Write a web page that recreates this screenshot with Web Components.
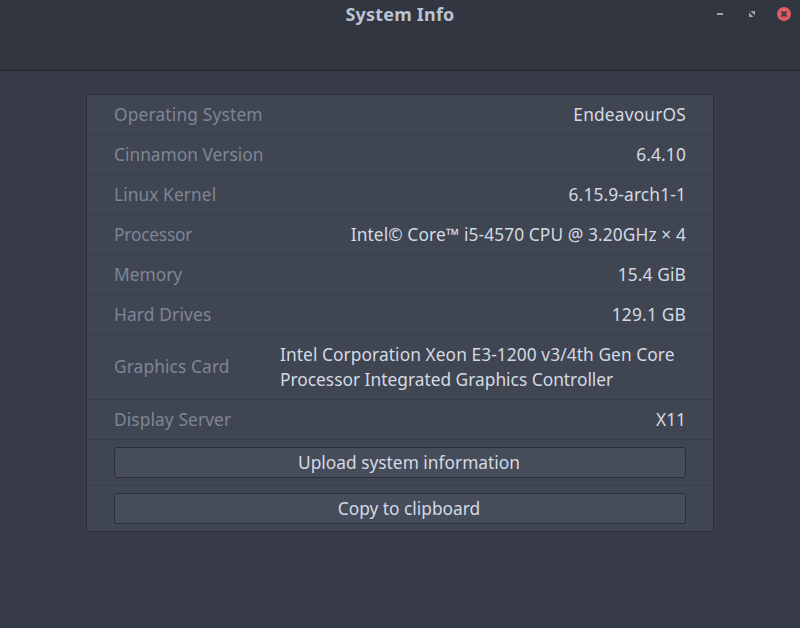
<!DOCTYPE html>
<html>
<head>
<meta charset="utf-8">
<title>System Info</title>
<style>
    html, body { margin: 0; height: 100%; }
    body { background: #383c4a; font-family: "Noto Sans", sans-serif; overflow: hidden; }
</style>
</head>
<body>
<sys-window>
    <span slot="title">System Info</span>
    <info-row label="Operating System" label-track=".17" value-track=".18">EndeavourOS</info-row>
    <info-row label="Cinnamon Version" value-track=".15">6.4.10</info-row>
    <info-row label="Linux Kernel" label-track=".08" value-track=".14">6.15.9-arch1-1</info-row>
    <info-row label="Processor" label-track="-.2" value-track=".1">Intel© Core™ i5-4570 CPU @ 3.20GHz × 4</info-row>
    <info-row label="Memory" value-track=".12">15.4 GiB</info-row>
    <info-row label="Hard Drives" label-track=".15" value-track=".2">129.1 GB</info-row>
    <info-row label="Graphics Card" label-track=".1" wrap><span style="letter-spacing:.07px">Intel Corporation Xeon E3-1200 v3/4th Gen Core</span> Processor Integrated Graphics Controller</info-row>
    <info-row label="Display Server" label-track=".1">X11</info-row>
    <button-row>Upload system information</button-row>
    <button-row last>Copy to clipboard</button-row>
</sys-window>
<script>
class SysTitlebar extends HTMLElement {
    constructor() {
        super();
        this._root = this.attachShadow({ mode: "open" });
        this._root.innerHTML = `
            <style>
                :host {
                    display: flex;
                    box-sizing: border-box;
                    height: 71px;
                    background: #323641;
                    border-bottom: 1px solid #262932;
                    color: #b9c3d2;
                    font-size: 18px;
                    font-weight: 700;
                    letter-spacing: .2px;
                    line-height: 24px;
                    position: relative;
                }
                .title { flex: 1; text-align: center; padding-top: 2px; }
                .buttons {
                    position: absolute;
                    top: 7px;
                    right: 9px;
                    display: flex;
                    gap: 18px;
                    align-items: center;
                }
                svg { display: block; }
            </style>
            <div class="title"><slot></slot></div>
            <div class="buttons">
                <svg width="14" height="14" viewBox="0 0 14 14"><rect x="4" y="6" width="6" height="2" fill="#9da3af"/></svg>
                <svg width="14" height="14" viewBox="0 0 14 14"><path d="M5.500 4H10V8.500z M4 5.500V10H8.500z" fill="#9da3af"/></svg>
                <svg width="14" height="14" viewBox="0 0 14 14">
                    <circle cx="7" cy="7" r="7" fill="#e05a64"/>
                    <path d="M4.500 4.500l5 5m0-5l-5 5" stroke="#383c4a" stroke-width="2"/>
                </svg>
            </div>
        `;
    }
}
customElements.define("sys-titlebar", SysTitlebar);

class SysWindow extends HTMLElement {
    constructor() {
        super();
        this._root = this.attachShadow({ mode: "open" });
        this._root.innerHTML = `
            <style>
                :host { display: block; }
                .content { padding: 23px 86px 0; }
                .panel {
                    background: #404552;
                    border: 1px solid #2b2e39;
                }
            </style>
            <sys-titlebar><slot name="title"></slot></sys-titlebar>
            <div class="content">
                <div class="panel"><slot></slot></div>
            </div>
        `;
    }
}
customElements.define("sys-window", SysWindow);

class InfoRow extends HTMLElement {
    constructor() {
        super();
        this._root = this.attachShadow({ mode: "open" });
        this._root.innerHTML = `
            <style>
                :host {
                    display: flex;
                    box-sizing: border-box;
                    justify-content: space-between;
                    align-items: center;
                    padding: 7px 27px;
                    min-height: 40px;
                    border-bottom: 1px solid #393d49;
                    font-size: 17.33px;
                    line-height: 25px;
                    color: #d3dae3;
                }
                .label { color: #7e8595; white-space: nowrap; }
                .value { text-align: right; }
                :host([wrap]) .label { padding-bottom: 2px; }
                :host([wrap]) .value { text-align: left; width: 406px; }
            </style>
            <div class="label"></div>
            <div class="value"><slot></slot></div>
        `;
    }
    connectedCallback() {
        const label = this._root.querySelector(".label");
        label.textContent = this.getAttribute("label");
        // hinted widths in the reference run a bit wider on some rows
        if (this.hasAttribute("label-track")) {
            label.style.letterSpacing = this.getAttribute("label-track") + "px";
        }
        if (this.hasAttribute("value-track")) {
            this._root.querySelector(".value").style.letterSpacing = this.getAttribute("value-track") + "px";
        }
    }
}
customElements.define("info-row", InfoRow);

class ButtonRow extends HTMLElement {
    constructor() {
        super();
        this._root = this.attachShadow({ mode: "open" });
        this._root.innerHTML = `
            <style>
                :host {
                    display: block;
                    padding: 7px 27px;
                    border-bottom: 1px solid #393d49;
                }
                :host([last]) { border-bottom: none; }
                button {
                    display: block;
                    box-sizing: border-box;
                    width: 100%;
                    height: 31px;
                    padding: 0 0 0 18px;
                    background: #474c5a;
                    border: 1px solid #2b2e39;
                    border-radius: 3px;
                    color: #d3dae3;
                    font: 17.33px/25px "Noto Sans", sans-serif;
                }
            </style>
            <button><slot></slot></button>
        `;
    }
}
customElements.define("button-row", ButtonRow);
</script>
</body>
</html>
